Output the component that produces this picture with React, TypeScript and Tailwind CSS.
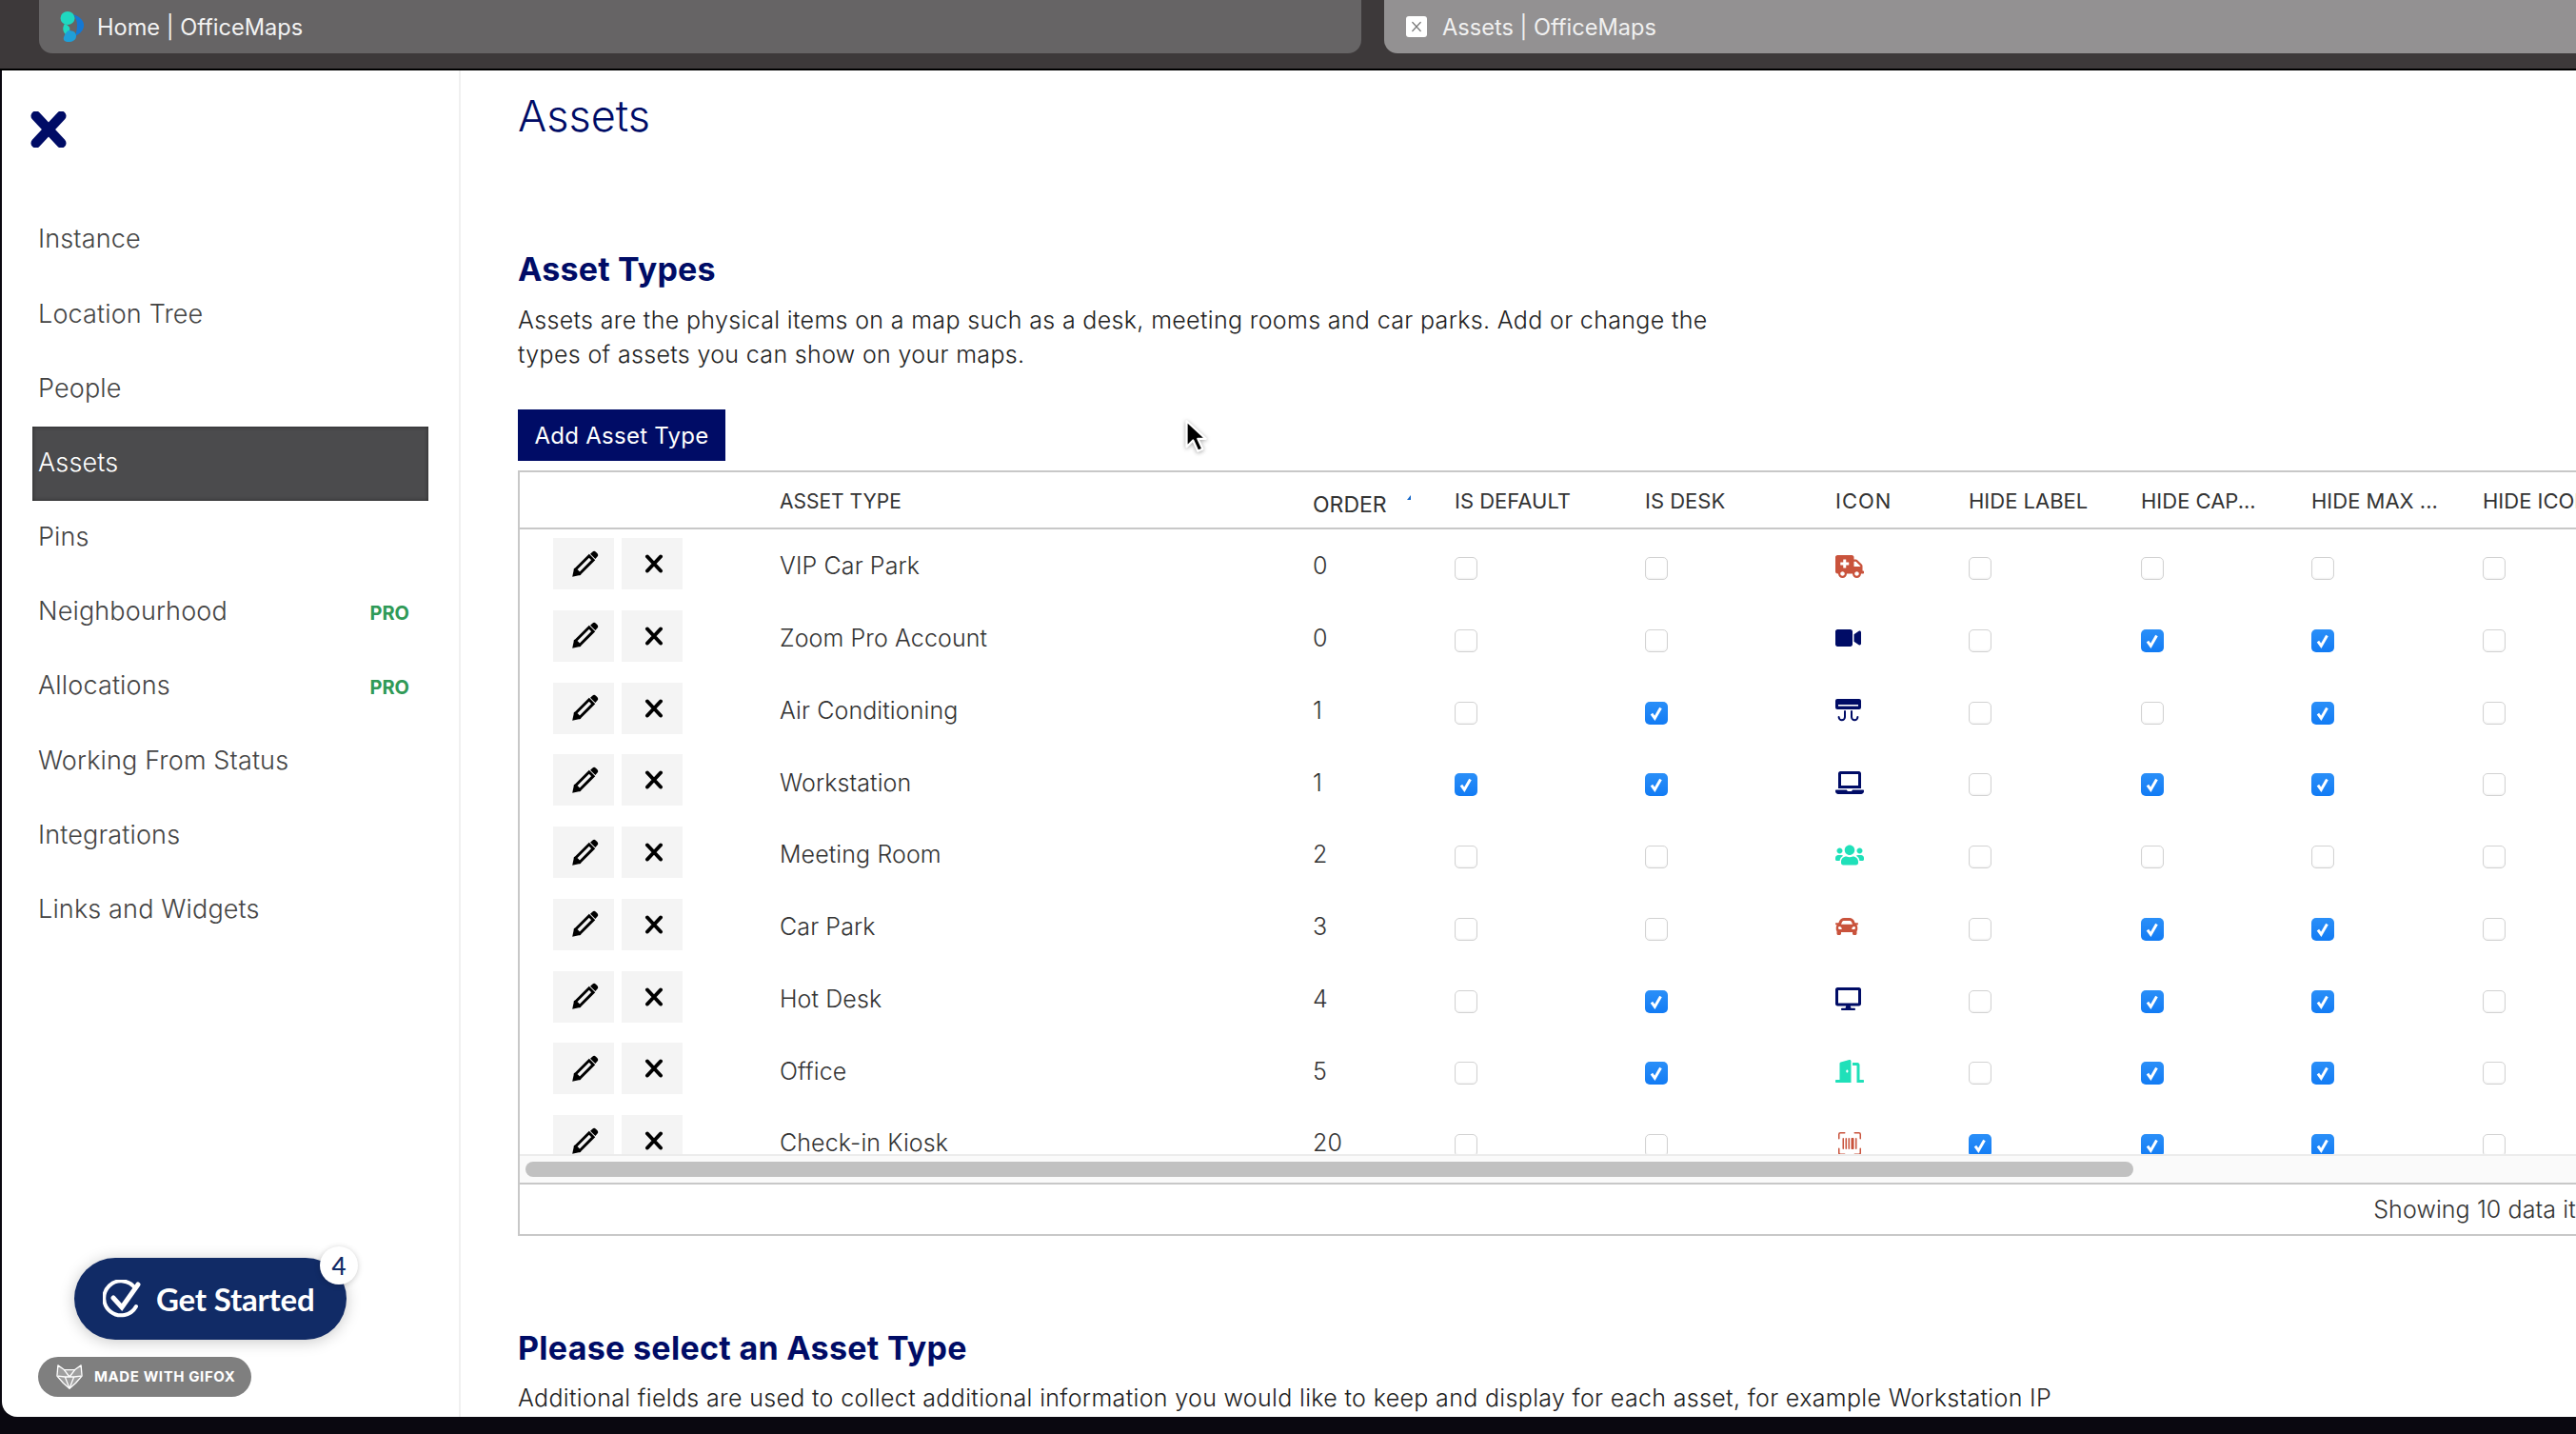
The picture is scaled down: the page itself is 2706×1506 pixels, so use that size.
import React from 'react';
import { FaAmbulance, FaVideo, FaLaptop, FaUsers, FaCar, FaDesktop, FaDoorOpen } from 'react-icons/fa';
import { BsUpcScan } from 'react-icons/bs';

const navItems = [
  { label: 'Instance' },
  { label: 'Location Tree' },
  { label: 'People' },
  { label: 'Assets', active: true },
  { label: 'Pins' },
  { label: 'Neighbourhood', pro: true },
  { label: 'Allocations', pro: true },
  { label: 'Working From Status' },
  { label: 'Integrations' },
  { label: 'Links and Widgets' },
];

const RED = 'text-[#c9533c]';
const NAVY = 'text-[#000c66]';
const TEAL = 'text-[#1fe0b9]';

function AirConIcon({ className }: { className?: string }) {
  return (
    <svg viewBox="0 0 27 24" className={className} fill="currentColor">
      <rect x="0" y="0" width="27" height="11" rx="2" />
      <rect x="3" y="6" width="21" height="1.6" fill="#fff" />
      <path d="M10 13v6a3.2 3.2 0 0 1-6.4 0M17 13v6a3.2 3.2 0 0 0 6.4 0" fill="none" stroke="currentColor" strokeWidth="2" strokeLinecap="round" />
    </svg>
  );
}

const rows = [
  { name: 'VIP Car Park', order: 0, icon: <FaAmbulance className={`h-[24px] w-[30px] ${RED}`} />, checks: [0, 0, 0, 0, 0, 0] },
  { name: 'Zoom Pro Account', order: 0, icon: <FaVideo className={`h-[24px] w-[27px] ${NAVY}`} />, checks: [0, 0, 0, 1, 1, 0] },
  { name: 'Air Conditioning', order: 1, icon: <AirConIcon className={`h-[24px] w-[27px] ${NAVY}`} />, checks: [0, 1, 0, 0, 1, 0] },
  { name: 'Workstation', order: 1, icon: <FaLaptop className={`h-[24px] w-[30px] ${NAVY}`} />, checks: [1, 1, 0, 1, 1, 0] },
  { name: 'Meeting Room', order: 2, icon: <FaUsers className={`h-[24px] w-[30px] ${TEAL}`} />, checks: [0, 0, 0, 0, 0, 0] },
  { name: 'Car Park', order: 3, icon: <FaCar className={`h-[24px] w-[24px] ${RED}`} />, checks: [0, 0, 0, 1, 1, 0] },
  { name: 'Hot Desk', order: 4, icon: <FaDesktop className={`h-[24px] w-[27px] ${NAVY}`} />, checks: [0, 1, 0, 1, 1, 0] },
  { name: 'Office', order: 5, icon: <FaDoorOpen className={`h-[24px] w-[30px] ${TEAL}`} />, checks: [0, 1, 0, 1, 1, 0] },
  { name: 'Check-in Kiosk', order: 20, icon: <BsUpcScan className={`h-[24px] w-[30px] ${RED}`} />, checks: [0, 0, 1, 1, 1, 0] },
];

const gridCols = 'grid grid-cols-[273px_560px_149px_200px_200px_140px_181px_179px_180px_180px]';

function CrossIcon({ className, stroke = 4 }: { className?: string; stroke?: number }) {
  return (
    <svg viewBox="0 0 20 20" className={className} fill="none" stroke="currentColor" strokeWidth={stroke} strokeLinecap="round">
      <path d="M3 2.5l14 15M17 2.5l-14 15" />
    </svg>
  );
}

function PencilIcon() {
  return (
    <svg viewBox="0 0 24 24" className="ml-[3px] h-[29px] w-[29px] text-black">
      <path d="M3.8 16.6 15.6 4.8l3.6 3.6L7.4 20.2z" fill="none" stroke="currentColor" strokeWidth="2.4" />
      <path d="M1 23l1.6-7.6 6 6z" fill="currentColor" />
      <path d="M16.6 3l1.8-1.6a2.2 2.2 0 0 1 3.1 0l1.1 1.1a2.2 2.2 0 0 1 0 3.1L21 7.4z" fill="currentColor" />
    </svg>
  );
}

function Checkbox({ checked }: { checked: boolean }) {
  if (checked) {
    return (
      <div className="mt-[20px] flex h-[24px] w-[24px] items-center justify-center rounded-[5px] bg-gradient-to-b from-[#2a8ff8] to-[#117bf4]">
        <svg viewBox="0 0 16 16" className="h-[18px] w-[18px]" fill="none" stroke="#fff" strokeWidth="2.6">
          <path d="M3.5 8.5l3 4.2L12 3.2" />
        </svg>
      </div>
    );
  }
  return <div className="mt-[20px] h-[24px] w-[24px] rounded-[5px] border border-[#d2d2d2] bg-white shadow-[inset_0_-1px_2px_rgba(0,0,0,0.06)]" />;
}

function FoxIcon() {
  return (
    <svg viewBox="0 0 30 30" className="h-[28px] w-[30px]" fill="none" stroke="#fff" strokeWidth="1.4" strokeLinejoin="round">
      <path d="M2 2l7 5h12l7-5 1 12-7 8-7 6-7-6-7-8z" fill="#fff" fillOpacity="0.25" />
      <path d="M2 14l8 1 5 13 5-13 8-1M9 7l6 8 6-8M10 15h10" />
    </svg>
  );
}

function HomeFavicon() {
  return (
    <svg viewBox="0 0 26 32" className="h-[32px] w-[26px]">
      <ellipse cx="8" cy="7" rx="7.5" ry="7" fill="#1fd8c0" />
      <path d="M5 13c5 2 7 5 4 9l-2 3C3 22 2 17 5 13z" fill="#1fd8c0" />
      <path d="M14 3c8 3 12 8 11 13-1 5-5 8-9 10 2-7 4-15-2-23z" fill="#1478d4" />
      <path d="M9 20c5 0 8 2 8 6 0 4-4 6-8 6-4 0-6-2-5-5 1-3 3-6 5-7z" fill="#1f9fd8" />
    </svg>
  );
}

export default function App() {
  return (
    <div className="flex h-[1506px] w-[2706px] flex-col overflow-hidden bg-[#0a0810] font-['Inter',sans-serif]">
      {/* Browser tabs */}
      <div className="flex h-[74px] shrink-0 gap-[24px] border-b-2 border-black bg-[#3d393a] pl-[41px]">
        <div className="flex h-[56px] w-[1389px] items-center gap-[13px] rounded-b-[14px] bg-[#666465] pl-[22px] text-[23.6px] text-[#f2f2f2]">
          <HomeFavicon />
          <span className="pt-[2px]">Home | OfficeMaps</span>
        </div>
        <div className="flex h-[56px] flex-1 items-center gap-[16px] rounded-bl-[14px] bg-[#939192] pl-[23px] text-[23.6px] text-[#f0f0f0]">
          <div className="flex h-[22px] w-[22px] items-center justify-center rounded-[3px] bg-white text-[#777]">
            <CrossIcon className="h-[12px] w-[12px]" stroke={2} />
          </div>
          <span className="pt-[2px]">Assets | OfficeMaps</span>
        </div>
      </div>

      {/* Page */}
      <div className="ml-[2px] flex h-[1414px] shrink-0 overflow-hidden rounded-bl-[16px] bg-white">
        <aside className="flex w-[482px] shrink-0 flex-col border-r-2 border-[#f0f0f0] pl-[30px]">
          <CrossIcon className="mt-[43px] h-[38px] w-[38px] text-[#000c66]" stroke={5.5} />
          <nav className="mt-[58px] w-[418px] pl-[2px]">
            {navItems.map(item => (
              <div
                key={item.label}
                className={`flex h-[78.2px] items-center justify-between pl-[6px] pr-[20px] text-[27px] font-light tracking-[0.15px] ${
                  item.active ? 'bg-[#4b4b4d] text-white shadow-[inset_0_0_4px_rgba(0,0,0,0.5)]' : 'text-[#444]'
                }`}
              >
                <span className="pb-[1px]">{item.label}</span>
                {item.pro && <span className="pt-[2px] text-[20px] font-bold tracking-normal text-[#2f9a57]">PRO</span>}
              </div>
            ))}
          </nav>
          <div className="mt-auto pb-[21px] pl-[8px]">
            <div className="relative ml-[38px] flex h-[86px] w-[286px] items-center gap-[16px] rounded-full bg-[#112b66] pl-[30px] font-['Lato',sans-serif] text-[33px] font-bold tracking-[-0.2px] text-white shadow-[0_2px_16px_rgba(0,0,0,0.22)]">
              <svg viewBox="0 0 40 40" className="h-[40px] w-[40px]" fill="none" stroke="#fff" strokeWidth="4" strokeLinecap="round">
                <path d="M34 9A18 18 0 1 0 35 28" />
                <path d="M11 19l9 10L37 5" strokeWidth="5" />
              </svg>
              <span className="pt-[2px]">Get Started</span>
              <div className="absolute right-[-12px] top-[-12px] flex h-[40px] w-[40px] items-center justify-center rounded-full bg-white text-[26px] font-medium text-[#112b66] shadow-[0_1px_6px_rgba(0,0,0,0.2)]">
                4
              </div>
            </div>
            <div className="mt-[18px] flex h-[42px] w-[224px] items-center gap-[11px] rounded-full bg-[#7f7f7f] pl-[18px] text-[15px] font-bold tracking-[0.6px] text-white">
              <FoxIcon />
              <span>MADE WITH GIFOX</span>
            </div>
          </div>
        </aside>

        <main className="min-w-0 flex-1 overflow-hidden pl-[60px] font-light">
          <h1 className="pt-[24px] text-[45px] leading-[48px] text-[#000c66]">Assets</h1>
          <h2 className="mt-[114px] pt-[2px] text-[34px] font-bold leading-[42px] tracking-[0.2px] text-[#000c66]">Asset Types</h2>
          <p className="mt-[14px] w-[1300px] text-[25px] leading-[36px] tracking-[0.34px] text-[#222]">
            Assets are the physical items on a map such as a desk, meeting rooms and car parks. Add or change the
            <br />
            types of assets you can show on your maps.
          </p>
          <div className="mt-[40px] flex h-[54px] w-[218px] items-center justify-center bg-[#000c66] pt-[2px] text-[24px] font-normal tracking-[0.25px] text-white">
            Add Asset Type
          </div>

          {/* Asset type table */}
          <div className="mt-[10px] w-[2246px] border-2 border-[#c8c8c8]">
            <div className={`${gridCols} h-[60px] items-center border-b-2 border-[#c8c8c8] pt-[3px] text-[22px] font-normal text-[#333]`}>
              <div />
              <div className="text-[21px]">ASSET TYPE</div>
              <div className="flex items-center pt-[8px]">
                <span className="text-[23px]">ORDER</span>
                <svg viewBox="0 0 4 5" className="mb-[16px] ml-[21px] h-[5px] w-[4px]"><path d="M4 0v5H0z" fill="#1466c8" /></svg>
              </div>
              <div>IS DEFAULT</div>
              <div>IS DESK</div>
              <div className="tracking-[1px]">ICON</div>
              <div>HIDE LABEL</div>
              <div>HIDE CAP...</div>
              <div>HIDE MAX ...</div>
              <div>HIDE ICON</div>
            </div>
            <div className="h-[656px] overflow-hidden">
              {rows.map(row => (
                <div key={row.name} className={`${gridCols} h-[75.75px] pt-[9px] text-[25px] tracking-[0.1px] text-[#333]`}>
                  <div className="flex h-[54px] gap-[8px] pl-[35px]">
                    <div className="flex h-[54px] w-[64px] items-center justify-center bg-[#f4f4f4]"><PencilIcon /></div>
                    <div className="flex h-[54px] w-[64px] items-center justify-center bg-[#f4f4f4]"><CrossIcon className="ml-[3px] h-[20px] w-[20px] text-black" /></div>
                  </div>
                  <div className="flex h-[54px] items-center pt-[6px]">{row.name}</div>
                  <div className="flex h-[54px] items-center pt-[6px]">{row.order}</div>
                  <Checkbox checked={!!row.checks[0]} />
                  <Checkbox checked={!!row.checks[1]} />
                  <div className="flex h-[54px] items-center pt-[5px]">{row.icon}</div>
                  <Checkbox checked={!!row.checks[2]} />
                  <Checkbox checked={!!row.checks[3]} />
                  <Checkbox checked={!!row.checks[4]} />
                  <Checkbox checked={!!row.checks[5]} />
                </div>
              ))}
            </div>
            <div className="h-[30px] border-t-2 border-[#ececec] bg-[#fafafa] pl-[6px] pt-[6px]">
              <div className="h-[16px] w-[1689px] rounded-[8px] bg-[#c1c1c1]" />
            </div>
            <div className="flex h-[54px] items-center justify-end border-t-2 border-[#c8c8c8] pr-[33px] pt-[2px] text-[25px] tracking-[0.1px] text-[#333]">
              Showing 10 data items
            </div>
          </div>

          <h2 className="mt-[95px] pt-[2px] text-[34px] font-bold leading-[42px] tracking-[0.3px] text-[#000c66]">Please select an Asset Type</h2>
          <p className="mt-[13px] text-[25px] leading-[36px] tracking-[0.34px] text-[#222]">
            Additional fields are used to collect additional information you would like to keep and display for each asset, for example Workstation IP
          </p>
        </main>
      </div>

      {/* Pointer caught in the recording */}
      <svg viewBox="0 0 22 32" className="absolute left-[1243px] top-[440px] h-[36px] w-[25px] drop-shadow-[0_1px_2px_rgba(0,0,0,0.35)]">
        <path d="M3 2v24l6-6 4.5 10 4.5-2-4.5-9.5H21z" fill="#000" stroke="#fff" strokeWidth="2" strokeLinejoin="round" />
      </svg>
    </div>
  );
}
